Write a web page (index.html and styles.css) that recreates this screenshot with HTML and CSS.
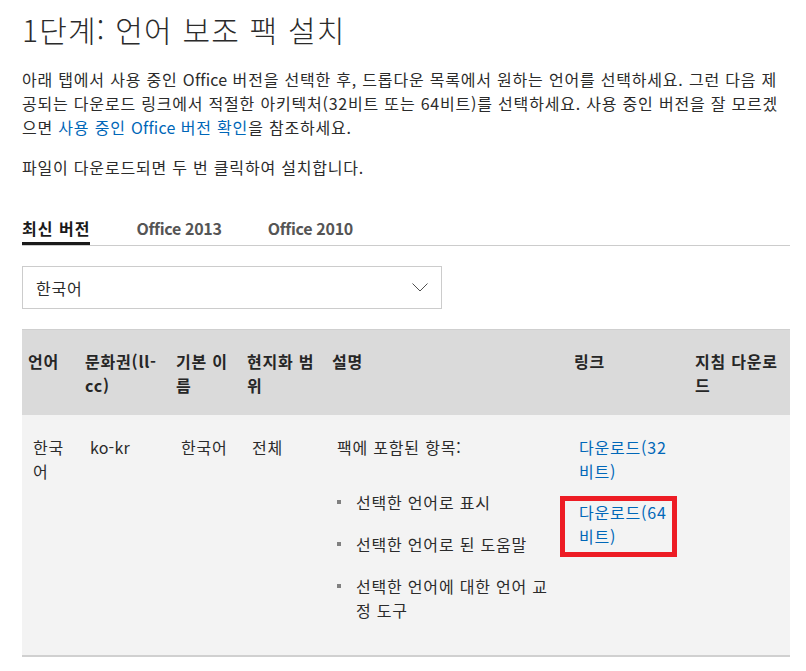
FILE: index.html
```html
<!DOCTYPE html>
<html lang="ko">
<head>
<meta charset="utf-8">
<title>1단계: 언어 보조 팩 설치</title>
<link rel="stylesheet" href="styles.css">
</head>
<body>
<main class="page">
  <h1 class="title">1단계: 언어 보조 팩 설치</h1>
  <p class="intro">아래 탭에서 사용 중인 <span class="latin">Office</span> 버전을 선택한 후, 드롭다운 목록에서 원하는 언어를 선택하세요. 그런 다음 제공되는 다운로드 링크에서 적절한 아키텍처(32비트 또는 64비트)를 선택하세요. 사용 중인 버전을 잘 모르겠으면 <a class="link" href="#">사용 중인 <span class="latin">Office</span> 버전 확인</a>을 참조하세요.</p>
  <p class="intro">파일이 다운로드되면 두 번 클릭하여 설치합니다.</p>

  <div class="tabs">
    <span class="tab active">최신 버전</span>
    <span class="tab">Office 2013</span>
    <span class="tab">Office 2010</span>
  </div>

  <div class="select">
    <span class="select-value">한국어</span>
    <svg class="chevron" width="16" height="9" viewBox="0 0 16 9"><path d="M0.5 0.5 L8 8 L15.5 0.5" fill="none" stroke="#505050" stroke-width="1"/></svg>
  </div>

  <table class="langs">
    <colgroup>
      <col class="c1"><col class="c2"><col class="c3"><col class="c4"><col class="c5"><col class="c6"><col class="c7">
    </colgroup>
    <thead>
      <tr>
        <th>언어</th>
        <th>문화권(ll-cc)</th>
        <th>기본 이름</th>
        <th>현지화 범위</th>
        <th>설명</th>
        <th>링크</th>
        <th>지침 다운로드</th>
      </tr>
    </thead>
    <tbody>
      <tr>
        <td>한국어</td>
        <td><span class="latin">ko-kr</span></td>
        <td>한국어</td>
        <td>전체</td>
        <td>
          <p class="cell-p">팩에 포함된 항목:</p>
          <ul class="items">
            <li>선택한 언어로 표시</li>
            <li>선택한 언어로 된 도움말</li>
            <li>선택한 언어에 대한 언어 교정 도구</li>
          </ul>
        </td>
        <td>
          <p class="dl"><a class="link" href="#">다운로드(32 비트)</a></p>
          <p class="dl marked"><a class="link" href="#">다운로드(64 비트)</a></p>
        </td>
        <td></td>
      </tr>
    </tbody>
  </table>
</main>
</body>
</html>
```

FILE: styles.css
```css
html, body {
  margin: 0;
  padding: 0;
  background: #ffffff;
}

body {
  font-family: "Noto Sans CJK KR", "Noto Sans", sans-serif;
  font-size: 16px;
  line-height: 24px;
  letter-spacing: 0.8px;
  color: #2b2b2b;
}

.latin {
  letter-spacing: 0.2px;
}

.page {
  padding: 0 16px 0 22px;
}

.title {
  margin: 9px 0 0;
  font-size: 30px;
  line-height: 40px;
  font-weight: 300;
  letter-spacing: 1.2px;
  color: #2b2b2b;
}

.intro {
  margin: 18px 0 0;
}

.intro + .intro {
  margin-top: 16px;
}

.link {
  color: #0067b8;
  text-decoration: none;
}

.tabs {
  display: flex;
  gap: 46px;
  margin-top: 37px;
  border-bottom: 1px solid #cccccc;
}

.tab {
  font-weight: 700;
  color: #555555;
  letter-spacing: -0.3px;
  padding-bottom: 2px;
  border-bottom: 3px solid transparent;
}

.tab.active {
  color: #1a1a1a;
  letter-spacing: 1px;
  border-bottom-color: #1a1a1a;
}

.select {
  margin-top: 20px;
  width: 420px;
  height: 43px;
  box-sizing: border-box;
  border: 1px solid #cccccc;
  display: flex;
  align-items: center;
  justify-content: space-between;
  padding: 0 13px 0 13px;
}

.select-value {
  color: #2b2b2b;
}

.chevron {
  display: block;
}

.langs {
  margin-top: 20px;
  width: 768px;
  table-layout: fixed;
  border-collapse: collapse;
  border-top: 1px solid #cfcfcf;
  border-bottom: 2px solid #d0d0d0;
}

.c1 { width: 57px; }
.c2 { width: 91px; }
.c3 { width: 71px; }
.c4 { width: 85px; }
.c5 { width: 242px; }
.c6 { width: 121px; }
.c7 { width: 101px; }

.langs th {
  background: #dadada;
  text-align: left;
  vertical-align: top;
  font-weight: 700;
  color: #262626;
  padding: 19px 5px 18px 6px;
}

.langs td {
  background: #f3f3f3;
  vertical-align: top;
  padding: 20px 10px 33px 11px;
}

.cell-p {
  margin: 0;
}

.items {
  list-style: none;
  margin: 31px 0 0;
  padding: 0;
}

.items li {
  display: flex;
  align-items: flex-start;
}

.items li + li {
  margin-top: 18px;
}

.items li::before {
  content: "";
  flex: none;
  width: 4px;
  height: 4px;
  background: #808080;
  margin: 10px 15px 0 0;
}

.dl {
  margin: 0;
}

.dl + .dl {
  margin-top: 17px;
}

.marked {
  position: relative;
}

.marked::after {
  content: "";
  position: absolute;
  left: -19px;
  top: -4px;
  width: 117px;
  height: 61px;
  box-sizing: border-box;
  border: 5px solid #ed1c24;
}
```
